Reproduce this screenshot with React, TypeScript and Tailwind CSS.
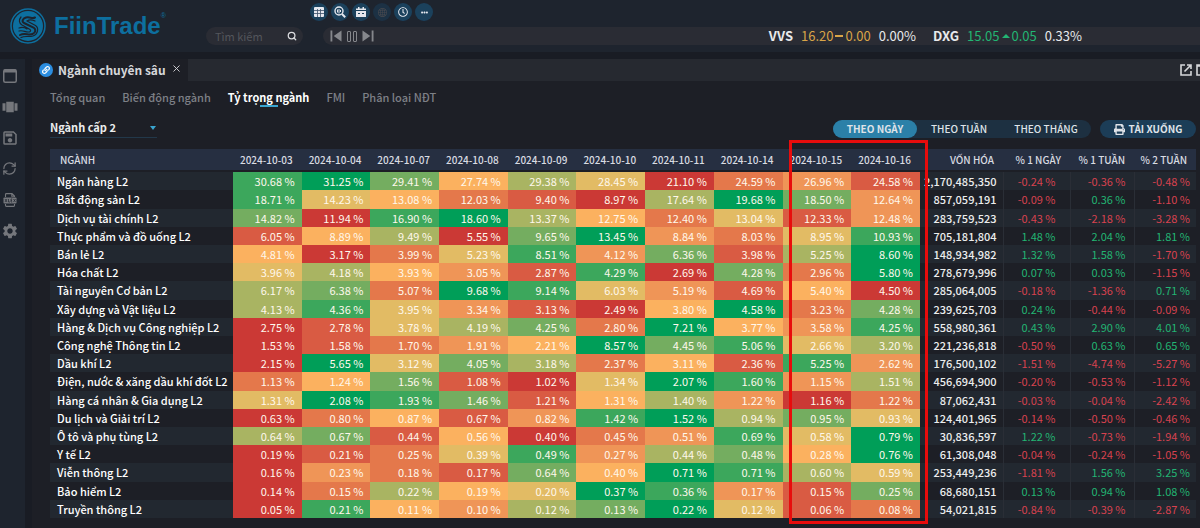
import { RefreshCw, Search, X } from "lucide-react";
import { FaRegClock, FaEllipsisH, FaPrint, FaLink } from "react-icons/fa";
import { MdOutlineSave, MdSettings, MdSkipNext, MdSkipPrevious, MdViewCarousel } from "react-icons/md";
import { BsGlobe2 } from "react-icons/bs";

const DATES = [
  "2024-10-03", "2024-10-04", "2024-10-07", "2024-10-08", "2024-10-09",
  "2024-10-10", "2024-10-11", "2024-10-14", "2024-10-15", "2024-10-16",
];

// lowest weight of the row -> highest
const HEAT = [
  "bg-[#cb3935]", "bg-[#d95b43]", "bg-[#e4784b]", "bg-[#ef9557]", "bg-[#fbb15f]",
  "bg-[#e2bb64]", "bg-[#a9b462]", "bg-[#74ad60]", "bg-[#3ca75c]", "bg-[#009e58]",
];

type Row = { name: string; w: number[]; cap: string; chg: number[] };

const ROWS: Row[] = [
  { name: "Ngân hàng L2", w: [30.68, 31.25, 29.41, 27.74, 29.38, 28.45, 21.1, 24.59, 26.96, 24.58], cap: "2,170,485,350", chg: [-0.24, -0.36, -0.48] },
  { name: "Bất động sản L2", w: [18.71, 14.23, 13.08, 12.03, 9.4, 8.97, 17.64, 19.68, 18.5, 12.64], cap: "857,059,191", chg: [-0.09, 0.36, -1.1] },
  { name: "Dịch vụ tài chính L2", w: [14.82, 11.94, 16.9, 18.6, 13.37, 12.75, 12.4, 13.04, 12.33, 12.48], cap: "283,759,523", chg: [-0.43, -2.18, -3.28] },
  { name: "Thực phẩm và đồ uống L2", w: [6.05, 8.89, 9.49, 5.55, 9.65, 13.45, 8.84, 8.03, 8.95, 10.93], cap: "705,181,804", chg: [1.48, 2.04, 1.81] },
  { name: "Bán lẻ L2", w: [4.81, 3.17, 3.99, 5.23, 8.51, 4.12, 6.36, 3.98, 5.25, 8.6], cap: "148,934,982", chg: [1.32, 1.58, -1.7] },
  { name: "Hóa chất L2", w: [3.96, 4.18, 3.93, 3.05, 2.87, 4.29, 2.69, 4.28, 2.96, 5.8], cap: "278,679,996", chg: [0.07, 0.03, -1.15] },
  { name: "Tài nguyên Cơ bản L2", w: [6.17, 6.38, 5.07, 9.68, 9.14, 6.03, 5.19, 4.69, 5.4, 4.5], cap: "285,064,005", chg: [-0.18, -1.36, 0.71] },
  { name: "Xây dựng và Vật liệu L2", w: [4.13, 4.36, 3.95, 3.34, 3.13, 2.49, 3.8, 4.58, 3.23, 4.28], cap: "239,625,703", chg: [0.24, -0.44, -0.09] },
  { name: "Hàng & Dịch vụ Công nghiệp L2", w: [2.75, 2.78, 3.78, 4.19, 4.25, 2.8, 7.21, 3.77, 3.58, 4.251], cap: "558,980,361", chg: [0.43, 2.9, 4.01] },
  { name: "Công nghệ Thông tin L2", w: [1.53, 1.58, 1.7, 1.91, 2.21, 8.57, 4.45, 5.06, 2.66, 3.2], cap: "221,236,818", chg: [-0.5, 0.63, 0.65] },
  { name: "Dầu khí L2", w: [2.15, 5.65, 3.12, 4.05, 3.18, 2.37, 3.11, 2.36, 5.25, 2.62], cap: "176,500,102", chg: [-1.51, -4.74, -5.27] },
  { name: "Điện, nước & xăng dầu khí đốt L2", w: [1.13, 1.24, 1.56, 1.08, 1.02, 1.34, 2.07, 1.6, 1.15, 1.51], cap: "456,694,900", chg: [-0.2, -0.53, -1.12] },
  { name: "Hàng cá nhân & Gia dụng L2", w: [1.31, 2.08, 1.93, 1.46, 1.21, 1.31, 1.4, 1.22, 1.16, 1.22], cap: "87,062,431", chg: [-0.03, -0.04, -2.42] },
  { name: "Du lịch và Giải trí L2", w: [0.63, 0.8, 0.87, 0.67, 0.82, 1.42, 1.52, 0.94, 0.95, 0.93], cap: "124,401,965", chg: [-0.14, -0.5, -0.46] },
  { name: "Ô tô và phụ tùng L2", w: [0.64, 0.67, 0.44, 0.56, 0.4, 0.45, 0.51, 0.69, 0.58, 0.79], cap: "30,836,597", chg: [1.22, -0.73, -1.94] },
  { name: "Y tế L2", w: [0.19, 0.21, 0.25, 0.39, 0.49, 0.27, 0.44, 0.48, 0.28, 0.76], cap: "61,308,048", chg: [-0.04, -0.24, -1.05] },
  { name: "Viễn thông L2", w: [0.16, 0.23, 0.18, 0.17, 0.64, 0.4, 0.71, 0.71, 0.6, 0.59], cap: "253,449,236", chg: [-1.81, 1.56, 3.25] },
  { name: "Bảo hiểm L2", w: [0.14, 0.15, 0.22, 0.19, 0.2, 0.37, 0.36, 0.17, 0.15, 0.25], cap: "68,680,151", chg: [0.13, 0.94, 1.08] },
  { name: "Truyền thông L2", w: [0.05, 0.21, 0.11, 0.1, 0.12, 0.13, 0.22, 0.12, 0.06, 0.08], cap: "54,021,815", chg: [-0.84, -0.39, -2.87] },
];

// equal weights: the earlier day ranks higher
function rank(w: number[], i: number) {
  return w.filter((v, j) => v < w[i] || (v === w[i] && j > i)).length;
}

function Logo() {
  return (
    <a href="#" className="flex w-[206px] shrink-0 items-center gap-2 pl-[10px] text-[#0d6f9f]">
      <svg viewBox="0 0 36 36" className="size-9" fill="none" stroke="currentColor">
        <circle cx="18" cy="18" r="17" strokeWidth="1.5" />
        <circle cx="18" cy="18" r="15" fill="currentColor" stroke="none" />
        <g stroke="#1d232d" strokeLinecap="round">
          <path d="M25 9.500c-3 1.500-5-1-9 0-3.500 1-4.500 4-2 5.500l9.500 4.500c3 2 2 5.500-1 6.500-4 1.500-8-1.500-12.500 1" strokeWidth="2" />
          <path d="M25 13c-3-1.500-6-1.500-8 0l8.500 4.500c4 3 2 9-2.500 10.500-4 1.300-8-.5-12 1.500" strokeWidth="1.200" />
          <path d="M11 9c-2.500 3-2 6 1 8l8 4.500c1.500 1.500 0 2.500-2 2.500-3 0-5-2-9-1M9 20c3-1 5-1 8 1" strokeWidth="1.200" />
        </g>
      </svg>
      <span className="flex font-['Liberation_Sans',Arial,sans-serif] text-2xl leading-8 font-bold">
        FiinTrade<sup className="top-0 text-[7px] leading-3 font-normal">®</sup>
      </span>
    </a>
  );
}

function Toolbar() {
  const btn = "flex size-[18px] items-center justify-center rounded-full bg-[#1b415c] text-[#e4e7ee]";
  return (
    <div className="flex h-6 items-center gap-[3px] pl-[104px]">
      <button aria-label="Bảng giá" className={btn}>
        <svg viewBox="0 0 10 10" className="size-[10px]">
          <rect width="10" height="10" rx="1" fill="currentColor" />
          <path d="M0 3.500h10M0 6.500h10M3.500 2v8M6.500 2v8" stroke="#3a5068" strokeWidth=".8" />
        </svg>
      </button>
      <button aria-label="Tra cứu" className={btn}>
        <svg viewBox="0 0 12 12" className="size-3" fill="none" stroke="currentColor">
          <circle cx="5" cy="5" r="4" strokeWidth="1.400" />
          <path d="M8 8l3.200 3.200" strokeWidth="2" />
          <path d="M3.500 3.500v3M5 3v4.500M6.500 4v2" strokeWidth="1" />
        </svg>
      </button>
      <button aria-label="Lịch sự kiện" className={btn}>
        <svg viewBox="0 0 10 10" className="size-[10px]">
          <path d="M2 0h1.500v1.500h3V0H8v1.500h2V10H0V1.500h2z" fill="currentColor" />
          <path d="M0 3.500h10M2 6.500h2M6 6.500h2" stroke="#1b415c" strokeWidth="1" />
        </svg>
      </button>
      <button aria-label="Thị trường" disabled className="flex size-[18px] items-center justify-center rounded-full bg-[#1c3144] text-[#4a4b50]">
        <BsGlobe2 size={9} />
      </button>
      <button aria-label="Lịch sử" className={btn}><FaRegClock size={10} /></button>
      <button aria-label="Thêm" className={btn}><FaEllipsisH size={7} /></button>
    </div>
  );
}

function Ticker() {
  return (
    <div className="flex h-[18px] flex-1 items-center justify-between rounded-l-full bg-[#2a2c34] pr-[118px] pl-[2px]">
      <div className="flex items-center text-[#85878c]">
        <button aria-label="Trước"><MdSkipPrevious size={22} /></button>
        <button aria-label="Tạm dừng" className="flex gap-[2px]">
          <span className="h-[11px] w-1 rounded-[1px] border border-current" />
          <span className="h-[11px] w-1 rounded-[1px] border border-current" />
        </button>
        <button aria-label="Sau"><MdSkipNext size={22} /></button>
      </div>
      <div className="flex items-center gap-[17px] text-[13px] leading-[18px] whitespace-nowrap text-[#e8e9eb]">
        <div className="flex gap-2">
          <b>VVS</b>
          <span className="flex items-center gap-[2px] text-[#d9a548]">
            16.20<i className="h-[2px] w-2 bg-current" />0.00
          </span>
          <span>0.00%</span>
        </div>
        <div className="flex gap-2">
          <b>DXG</b>
          <span className="flex items-center gap-[2px] text-[#22b573]">
            15.05
            <svg viewBox="0 0 8 4" className="h-1 w-2"><path d="M0 4l4-4 4 4z" fill="currentColor" /></svg>
            0.05
          </span>
          <span>0.33%</span>
        </div>
      </div>
    </div>
  );
}

function Sidebar() {
  const item = "flex size-[17px] items-center justify-center";
  return (
    <nav className="flex w-[25px] shrink-0 flex-col items-start gap-[14px] bg-[#1e242e] pt-2 pl-[1px] text-[#75777c]">
      <button aria-label="Cửa sổ" className={item}>
        <svg viewBox="0 0 14 14" className="size-[14px]" fill="none" stroke="currentColor">
          <rect x=".75" y=".75" width="12.500" height="12.500" rx="1.500" strokeWidth="1.500" />
          <path d="M1 2h12" strokeWidth="3" />
        </svg>
      </button>
      <button aria-label="Bố cục" className={item}><MdViewCarousel size={18} className="shrink-0" /></button>
      <button aria-label="Lưu" className={item}><MdOutlineSave size={18} className="shrink-0" /></button>
      <button aria-label="Làm mới" className={item}><RefreshCw size={15} strokeWidth={2} /></button>
      <button aria-label="Xuất Excel" className={item}>
        <svg viewBox="0 0 14 14" className="size-[14px]" fill="none" stroke="currentColor">
          <path d="M2.500 4V1.500Q2.500.6 3.400.6H9l2.500 2.500V4M2.500 11v1.500q0 .9.900.9h7.200q.9 0 .9-.9V11M8.800.8v2.500h2.500" strokeWidth="1.100" />
          <rect x=".5" y="4.500" width="13" height="6" rx=".8" fill="currentColor" stroke="none" />
          <path d="M2 6l2 3M4 6L2 9M5.500 6v3h1.500M8 9V6h1.200M8 7.500h1M8 9h1.200M10.500 6l2 3M12.500 6l-2 3" stroke="#1e242e" strokeWidth=".7" />
        </svg>
      </button>
      <button aria-label="Cài đặt" className={item}><MdSettings size={18} className="shrink-0" /></button>
    </nav>
  );
}

function HeatTable() {
  const th = "p-0 pr-[9px] text-right font-medium whitespace-nowrap";
  return (
    <div className="relative mt-[11px]">
      <table className="h-[369px] w-full table-fixed border-collapse text-[11px] leading-4">
        <colgroup>
          <col className="w-[183px]" />
          {DATES.map((d) => <col key={d} />)}
          <col className="w-[83px]" />
          <col className="w-[67px]" />
          <col className="w-[64px]" />
          <col className="w-[62px]" />
        </colgroup>
        <thead>
          <tr className="h-[22px] border-b-2 border-[#1d1f26] bg-[#262f41] text-[10px] text-[#d9dce2]">
            <th className="p-0 pl-[10px] text-left font-medium">NGÀNH</th>
            {DATES.map((d) => <th key={d} className={th}>{d}</th>)}
            <th className={th}>VỐN HÓA</th>
            <th className={th}>% 1 NGÀY</th>
            <th className={th}>% 1 TUẦN</th>
            <th className={th}>% 2 TUẦN</th>
          </tr>
        </thead>
        <tbody>
          {ROWS.map((r) => (
            <tr key={r.name} className="odd:bg-[#222830] even:bg-[#1d1f26]">
              <th scope="row" className="p-0 pl-[7px] text-left font-medium whitespace-nowrap text-white">{r.name}</th>
              {r.w.map((v, i) => (
                <td key={i} className={`p-0 pr-[7px] text-right text-[#fff8ec] ${HEAT[rank(r.w, i)]}`}>
                  {v.toFixed(2)} %
                </td>
              ))}
              <td className="p-0 pr-[6px] text-right font-medium text-[#eceded]">{r.cap}</td>
              {r.chg.map((c, i) => (
                <td
                  key={i}
                  className={`border-l border-[#2a2e36] p-0 text-right ${i === 0 ? "pr-[14px]" : i === 1 ? "pr-2" : "pr-[6px]"} ${c < 0 ? "text-[#d8424f]" : "text-[#22b573]"}`}
                >
                  {c.toFixed(2)} %
                </td>
              ))}
            </tr>
          ))}
        </tbody>
      </table>
      {/* Highlight around the last two sessions */}
      <div className="pointer-events-none absolute -top-[9px] right-[268px] -bottom-[6px] w-[139px] border-[3px] border-[#e80c0c]" />
    </div>
  );
}

export default function App() {
  return (
    <div className="flex min-h-screen flex-col overflow-hidden bg-[#191c24] font-['Noto_Sans_CJK_JP','Noto_Sans',sans-serif]">
      <header className="flex h-[52px] bg-[#1e242e]">
        <Logo />
        <div className="flex flex-1 flex-col gap-[3px]">
          <Toolbar />
          <div className="flex gap-5">
            <label className="flex h-[18px] w-[97px] items-center rounded-full bg-[#2a2c34] pr-[6px] pl-[9px] text-[#dcdde0]">
              <input type="text" placeholder="Tìm kiếm" className="min-w-0 flex-1 bg-transparent text-[11px] leading-4 outline-none placeholder:text-[#54565c]" />
              <Search size={10} strokeWidth={3} />
            </label>
            <Ticker />
          </div>
        </div>
      </header>

      <div className="mt-[7px] flex flex-1 gap-[7px]">
        <Sidebar />
        <main className="min-w-0 flex-1 bg-[#1d1f26]">
          <div className="flex h-[22px] items-center bg-[#262930] text-[#d6d7da]">
            <div className="flex h-full w-[156px] items-center gap-[5px] bg-[#1d1f26] pl-[7px]">
              <span className="flex size-[14px] items-center justify-center rounded-full bg-[#2b8de0] text-white">
                <FaLink size={8} />
              </span>
              <h1 className="text-[12px] leading-5 font-bold whitespace-nowrap">Ngành chuyên sâu</h1>
              <button aria-label="Đóng" className="pb-1"><X size={11} strokeWidth={2} /></button>
            </div>
            <div className="ml-auto flex gap-1">
              <button aria-label="Mở cửa sổ mới">
                <svg viewBox="0 0 12 12" className="size-3" fill="none" stroke="currentColor" strokeWidth="1.600">
                  <path d="M5 1H1v10h10V7M7 1h4v4M11 1L4.500 7.500" />
                </svg>
              </button>
              <button aria-label="Phóng to" className="w-1 overflow-hidden">
                <svg viewBox="0 0 12 12" className="size-3 max-w-none" fill="none" stroke="currentColor" strokeWidth="1.600">
                  <path d="M1 1h10v10H1zM1 2h10" />
                </svg>
              </button>
            </div>
          </div>

          <div className="pr-1 pl-[18px]">
            <nav className="flex gap-[17px] pt-2 text-[11px] leading-4 font-medium text-[#7d8086]">
              <a href="#">Tổng quan</a>
              <a href="#">Biến động ngành</a>
              <a href="#" className="flex flex-col items-center font-bold text-white">
                Tỷ trọng ngành
                <span className="h-[2px] w-[18px] bg-[#3aa5d0]" />
              </a>
              <a href="#">FMI</a>
              <a href="#">Phân loại NĐT</a>
            </nav>

            <div className="mt-[13px] flex h-[18px] items-center text-[10px] leading-4 text-[#dfe3e8]">
              <div className="relative h-[18px] w-[107px] border-b border-[#22384a]">
                <select aria-label="Ngành cấp" className="block h-[14px] w-full appearance-none bg-transparent text-[11px] leading-[14px] font-bold text-[#eceded]">
                  <option>Ngành cấp 2</option>
                </select>
                <svg viewBox="0 0 6 4" className="pointer-events-none absolute top-1.5 right-[1px] h-1 w-1.5"><path d="M0 0h6L3 4z" fill="#3aa5d0" /></svg>
              </div>
              <div className="ml-auto flex h-[18px] rounded-full bg-[#1d3041] font-medium">
                <button className="w-[84px] rounded-full bg-[#2b80a8] font-bold">THEO NGÀY</button>
                <button className="w-[84px]">THEO TUẦN</button>
                <button className="w-[90px]">THEO THÁNG</button>
              </div>
              <button className="ml-[9px] flex h-[18px] w-24 items-center justify-center gap-1 rounded-full bg-[#1c3d57] font-bold">
                <FaPrint size={11} />
                TẢI XUỐNG
              </button>
            </div>

            <HeatTable />
          </div>
        </main>
      </div>
    </div>
  );
}
